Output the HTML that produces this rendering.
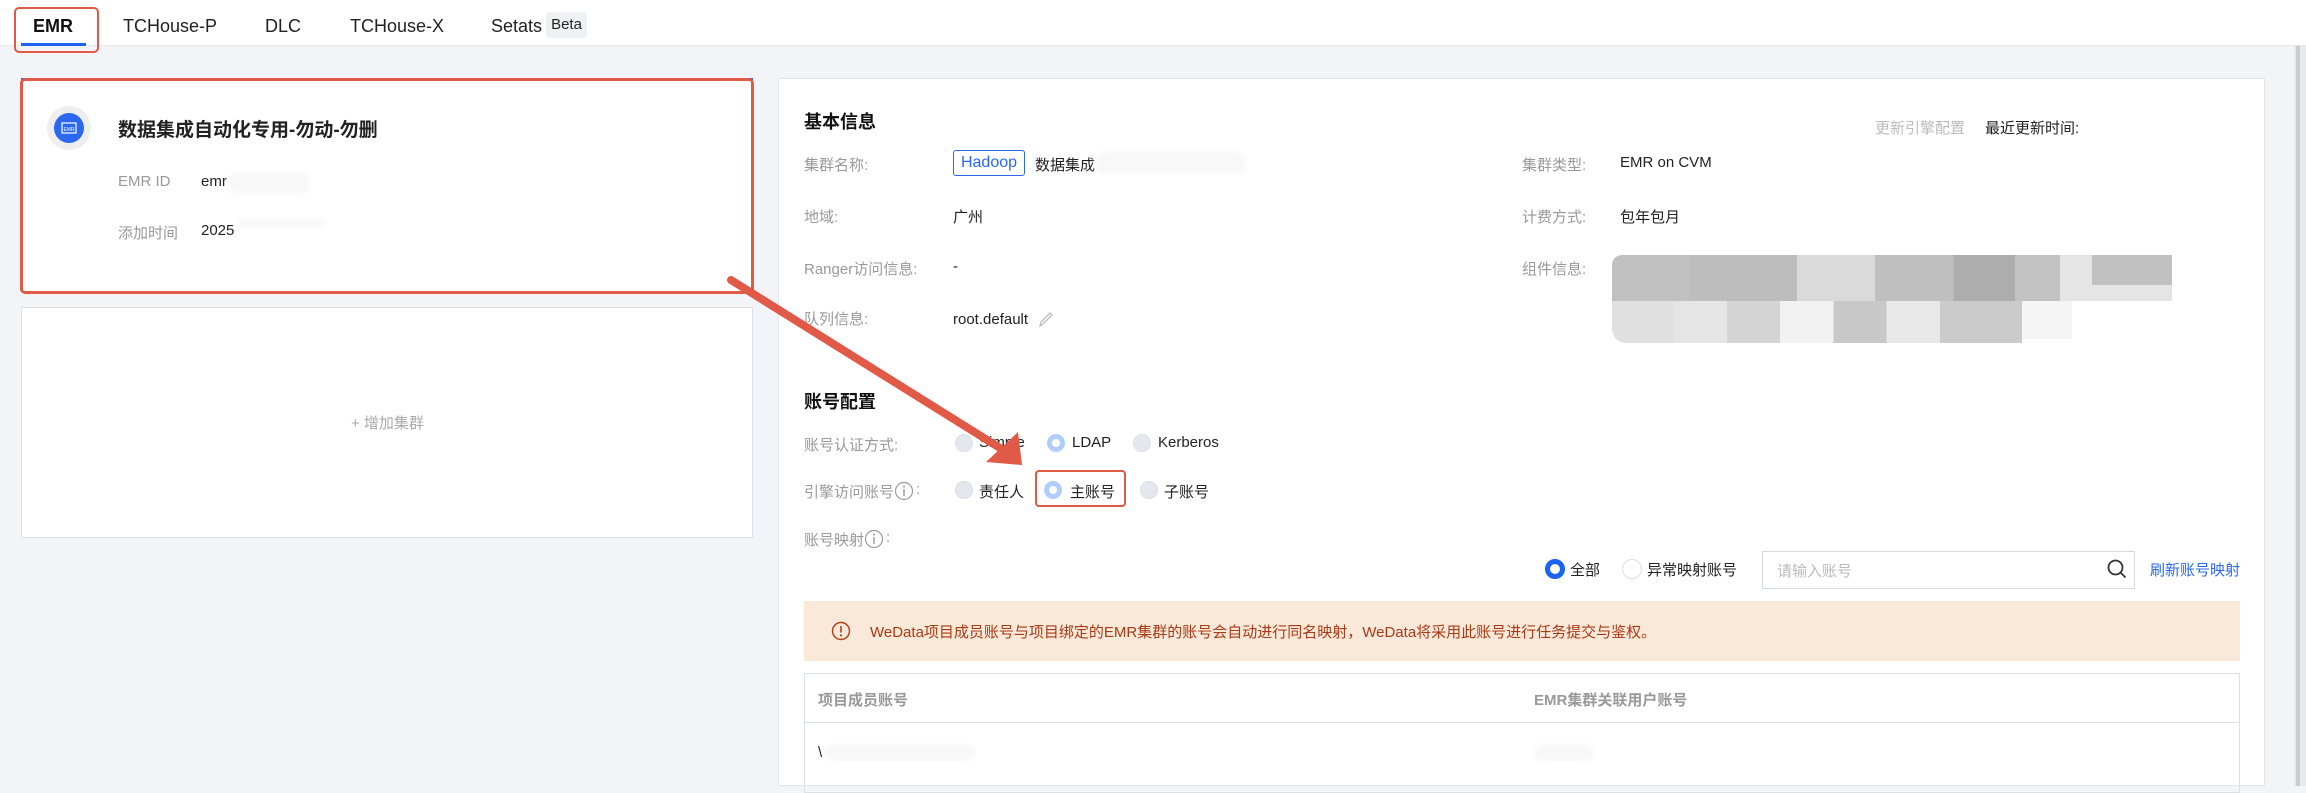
<!DOCTYPE html>
<html><head><meta charset="utf-8"><style>
*{margin:0;padding:0;box-sizing:border-box}
body{width:2306px;height:786px;overflow:hidden;background:#f3f4f7;font-family:"Liberation Sans","Noto Sans CJK SC",sans-serif;color:#222;position:relative}
.a{position:absolute;white-space:nowrap}
.lbl{color:#999;font-size:15px}
.val{color:#222;font-size:15px}
.r{position:absolute;width:18px;height:18px;border-radius:50%;background:#e5e7ee;border:1px solid #dcdfe6}
.rs{position:absolute;width:18px;height:18px;border-radius:50%;border:5px solid #b0cdfc;background:#fff}
.rb{position:absolute;width:18px;height:18px;border-radius:50%;border:5px solid #1e62f0;background:#fff}
.blur{position:absolute;background:#f8f8f8;border-radius:8px;filter:blur(2px)}
</style></head><body>
<div class="a" style="left:0;top:0;width:2306px;height:46px;background:#fff;border-bottom:1px solid #e6e8ee"></div>
<div class="a" style="left:33px;top:16px;font-size:18px;font-weight:bold;color:#111">EMR</div>
<div class="a" style="left:21px;top:43px;width:65px;height:3px;background:#1e62f0"></div>
<div class="a" style="left:14px;top:7px;width:85px;height:46px;border:2.5px solid #e05a47;border-radius:5px"></div>
<div class="a" style="left:123px;top:16px;font-size:18px">TCHouse-P</div>
<div class="a" style="left:265px;top:16px;font-size:18px">DLC</div>
<div class="a" style="left:350px;top:16px;font-size:18px">TCHouse-X</div>
<div class="a" style="left:491px;top:16px;font-size:18px">Setats</div>
<div class="a" style="left:546px;top:12px;width:41px;height:26px;background:#f0f1f4;border-radius:3px;font-size:15px;line-height:26px;text-align:center">Beta</div>
<div class="a" style="left:2294px;top:46px;width:12px;height:740px;background:#e8e9ec"></div>
<div class="a" style="left:2296px;top:46px;width:4px;height:740px;background:#c9cbcf"></div>
<div class="a" style="left:21px;top:78px;width:732px;height:216px;background:#fff;border-top:3px solid #1e62f0"></div>
<div class="a" style="left:47px;top:106px;width:44px;height:44px;border-radius:50%;background:#eeeeee"></div>
<div class="a" style="left:54px;top:113px;width:30px;height:30px;border-radius:50%;background:#2a68f2"></div>
<svg class="a" style="left:61px;top:122px" width="16" height="12"><rect x="1" y="1" width="14" height="10" fill="none" stroke="#fff" stroke-width="1.2"/><text x="8" y="9" font-size="5" fill="#fff" text-anchor="middle" font-family="Liberation Sans">EMR</text></svg>
<div class="a" style="left:118px;top:115px;font-size:19px;font-weight:bold;color:#222">数据集成自动化专用-勿动-勿删</div>
<div class="a lbl" style="left:118px;top:173px">EMR ID</div>
<div class="a val" style="left:201px;top:173px">emr</div>
<div class="blur" style="left:228px;top:172px;width:82px;height:22px"></div>
<div class="a lbl" style="left:118px;top:222px">添加时间</div>
<div class="a val" style="left:201px;top:222px">2025</div>
<div class="blur" style="left:238px;top:218px;width:88px;height:10px"></div>
<div class="a" style="left:20px;top:78px;width:734px;height:216px;border:3px solid #e05a47;border-radius:5px"></div>
<div class="a" style="left:21px;top:307px;width:732px;height:231px;background:#fff;border:1px solid #dcdfe5"></div>
<div class="a" style="left:351px;top:412px;font-size:15px;color:#aaa">+ 增加集群</div>
<div class="a" style="left:778px;top:78px;width:1487px;height:708px;background:#fff;border:1px solid #e2e4ea"></div>
<div class="a" style="left:804px;top:108px;font-size:18px;font-weight:bold;color:#111">基本信息</div>
<div class="a" style="left:1875px;top:117px;font-size:15px;color:#bbb">更新引擎配置</div>
<div class="a" style="left:1985px;top:117px;font-size:15px;color:#222">最近更新时间:</div>
<div class="a lbl" style="left:804px;top:154px">集群名称:</div>
<div class="a" style="left:953px;top:150px;width:72px;height:26px;border:1px solid #2a68f2;border-radius:3px;color:#2a68f2;font-size:16px;line-height:24px;text-align:center">Hadoop</div>
<div class="a val" style="left:1035px;top:154px">数据集成</div>
<div class="blur" style="left:1095px;top:152px;width:150px;height:22px"></div>
<div class="a lbl" style="left:804px;top:206px">地域:</div>
<div class="a val" style="left:953px;top:206px">广州</div>
<div class="a lbl" style="left:804px;top:258px">Ranger访问信息:</div>
<div class="a val" style="left:953px;top:258px">-</div>
<div class="a lbl" style="left:804px;top:308px">队列信息:</div>
<div class="a val" style="left:953px;top:311px">root.default</div>
<svg class="a" style="left:1037px;top:310px" width="17" height="19"><path d="M3 16 L4 12 L13 3 L15 5 L6 14 Z M3 16 L6 14" fill="none" stroke="#bbb" stroke-width="1.3"/></svg>
<div class="a lbl" style="left:1522px;top:154px">集群类型:</div>
<div class="a val" style="left:1620px;top:154px">EMR on CVM</div>
<div class="a lbl" style="left:1522px;top:206px">计费方式:</div>
<div class="a val" style="left:1620px;top:206px">包年包月</div>
<div class="a lbl" style="left:1522px;top:258px">组件信息:</div>
<div class="a" style="left:1612px;top:255px;width:560px;height:46px;border-radius:10px 0 0 0;background:linear-gradient(90deg,#c0c0c0 0 14%,#bdbdbd 14% 33%,#dadada 33% 47%,#bfbfbf 47% 61%,#adadad 61% 72%,#c2c2c2 72% 80%,#e5e5e5 80% 100%)"></div>
<div class="a" style="left:1612px;top:301px;width:410px;height:42px;border-radius:0 0 0 14px;background:linear-gradient(90deg,#e0e0e0 0 15%,#e5e5e5 15% 28%,#d4d4d4 28% 41%,#f2f2f2 41% 54%,#c8c8c8 54% 67%,#e8e8e8 67% 80%,#cbcbcb 80% 100%)"></div>
<div class="a" style="left:2022px;top:301px;width:50px;height:38px;background:#f5f5f5"></div>
<div class="a" style="left:2092px;top:255px;width:80px;height:30px;background:#c0c0c0"></div>
<div class="a" style="left:804px;top:388px;font-size:18px;font-weight:bold;color:#111">账号配置</div>
<div class="a lbl" style="left:804px;top:434px">账号认证方式:</div>
<div class="r" style="left:955px;top:434px"></div><div class="a val" style="left:979px;top:434px">Simple</div>
<div class="rs" style="left:1047px;top:434px"></div><div class="a val" style="left:1072px;top:434px">LDAP</div>
<div class="r" style="left:1133px;top:434px"></div><div class="a val" style="left:1158px;top:434px">Kerberos</div>
<div class="a lbl" style="left:804px;top:481px">引擎访问账号</div>
<svg class="a" style="left:894px;top:481px" width="20" height="20"><circle cx="10" cy="10" r="8.5" fill="none" stroke="#999" stroke-width="1.2"/><rect x="9.3" y="8" width="1.4" height="7" fill="#999"/><circle cx="10" cy="5.6" r="1" fill="#999"/></svg>
<div class="a lbl" style="left:916px;top:481px">:</div>
<div class="r" style="left:955px;top:481px"></div><div class="a val" style="left:979px;top:481px">责任人</div>
<div class="rs" style="left:1044px;top:481px"></div><div class="a val" style="left:1070px;top:481px">主账号</div>
<div class="a" style="left:1035px;top:470px;width:91px;height:37px;border:2.5px solid #e05a47;border-radius:4px"></div>
<div class="r" style="left:1140px;top:481px"></div><div class="a val" style="left:1164px;top:481px">子账号</div>
<div class="a lbl" style="left:804px;top:529px">账号映射</div>
<svg class="a" style="left:864px;top:529px" width="20" height="20"><circle cx="10" cy="10" r="8.5" fill="none" stroke="#999" stroke-width="1.2"/><rect x="9.3" y="8" width="1.4" height="7" fill="#999"/><circle cx="10" cy="5.6" r="1" fill="#999"/></svg>
<div class="a lbl" style="left:886px;top:529px">:</div>
<div class="rb" style="left:1545px;top:559px;width:20px;height:20px"></div><div class="a val" style="left:1570px;top:559px">全部</div>
<div class="r" style="left:1622px;top:559px;background:#fff;width:20px;height:20px"></div><div class="a val" style="left:1647px;top:559px">异常映射账号</div>
<div class="a" style="left:1762px;top:551px;width:373px;height:38px;border:1px solid #d6d9e0"></div>
<div class="a" style="left:1777px;top:560px;font-size:15px;color:#bbb">请输入账号</div>
<svg class="a" style="left:2106px;top:558px" width="22" height="22"><circle cx="9.5" cy="9.5" r="7" fill="none" stroke="#333" stroke-width="1.8"/><line x1="14.5" y1="14.5" x2="19.5" y2="19.5" stroke="#333" stroke-width="1.8"/></svg>
<div class="a" style="left:2150px;top:559px;font-size:15px;color:#2a68f2">刷新账号映射</div>
<div class="a" style="left:804px;top:601px;width:1436px;height:60px;background:#fae8d8"></div>
<svg class="a" style="left:830px;top:620px" width="22" height="22"><circle cx="11" cy="11" r="8.5" fill="none" stroke="#b4401e" stroke-width="1.5"/><rect x="10.2" y="6" width="1.6" height="6.5" fill="#b4401e"/><circle cx="11" cy="15.3" r="1.1" fill="#b4401e"/></svg>
<div class="a" style="left:870px;top:621px;font-size:15px;color:#a83a16">WeData项目成员账号与项目绑定的EMR集群的账号会自动进行同名映射，WeData将采用此账号进行任务提交与鉴权。</div>
<div class="a" style="left:804px;top:673px;width:1436px;height:120px;border:1px solid #dcdfe6"></div>
<div class="a" style="left:804px;top:722px;width:1436px;height:1px;background:#dcdfe6"></div>
<div class="a" style="left:818px;top:689px;font-size:15px;font-weight:bold;color:#999">项目成员账号</div>
<div class="a" style="left:1534px;top:689px;font-size:15px;font-weight:bold;color:#999">EMR集群关联用户账号</div>
<div class="a val" style="left:818px;top:744px">\</div>
<div class="blur" style="left:825px;top:745px;width:150px;height:16px"></div>
<div class="blur" style="left:1534px;top:745px;width:60px;height:16px"></div>
<svg class="a" style="left:0;top:0" width="2306" height="786">
<line x1="731" y1="280" x2="1000" y2="448" stroke="#e05a47" stroke-width="8" stroke-linecap="round"/>
<polygon points="1022,465 986,462 1018,432" fill="#e05a47"/>
</svg>
</body></html>
